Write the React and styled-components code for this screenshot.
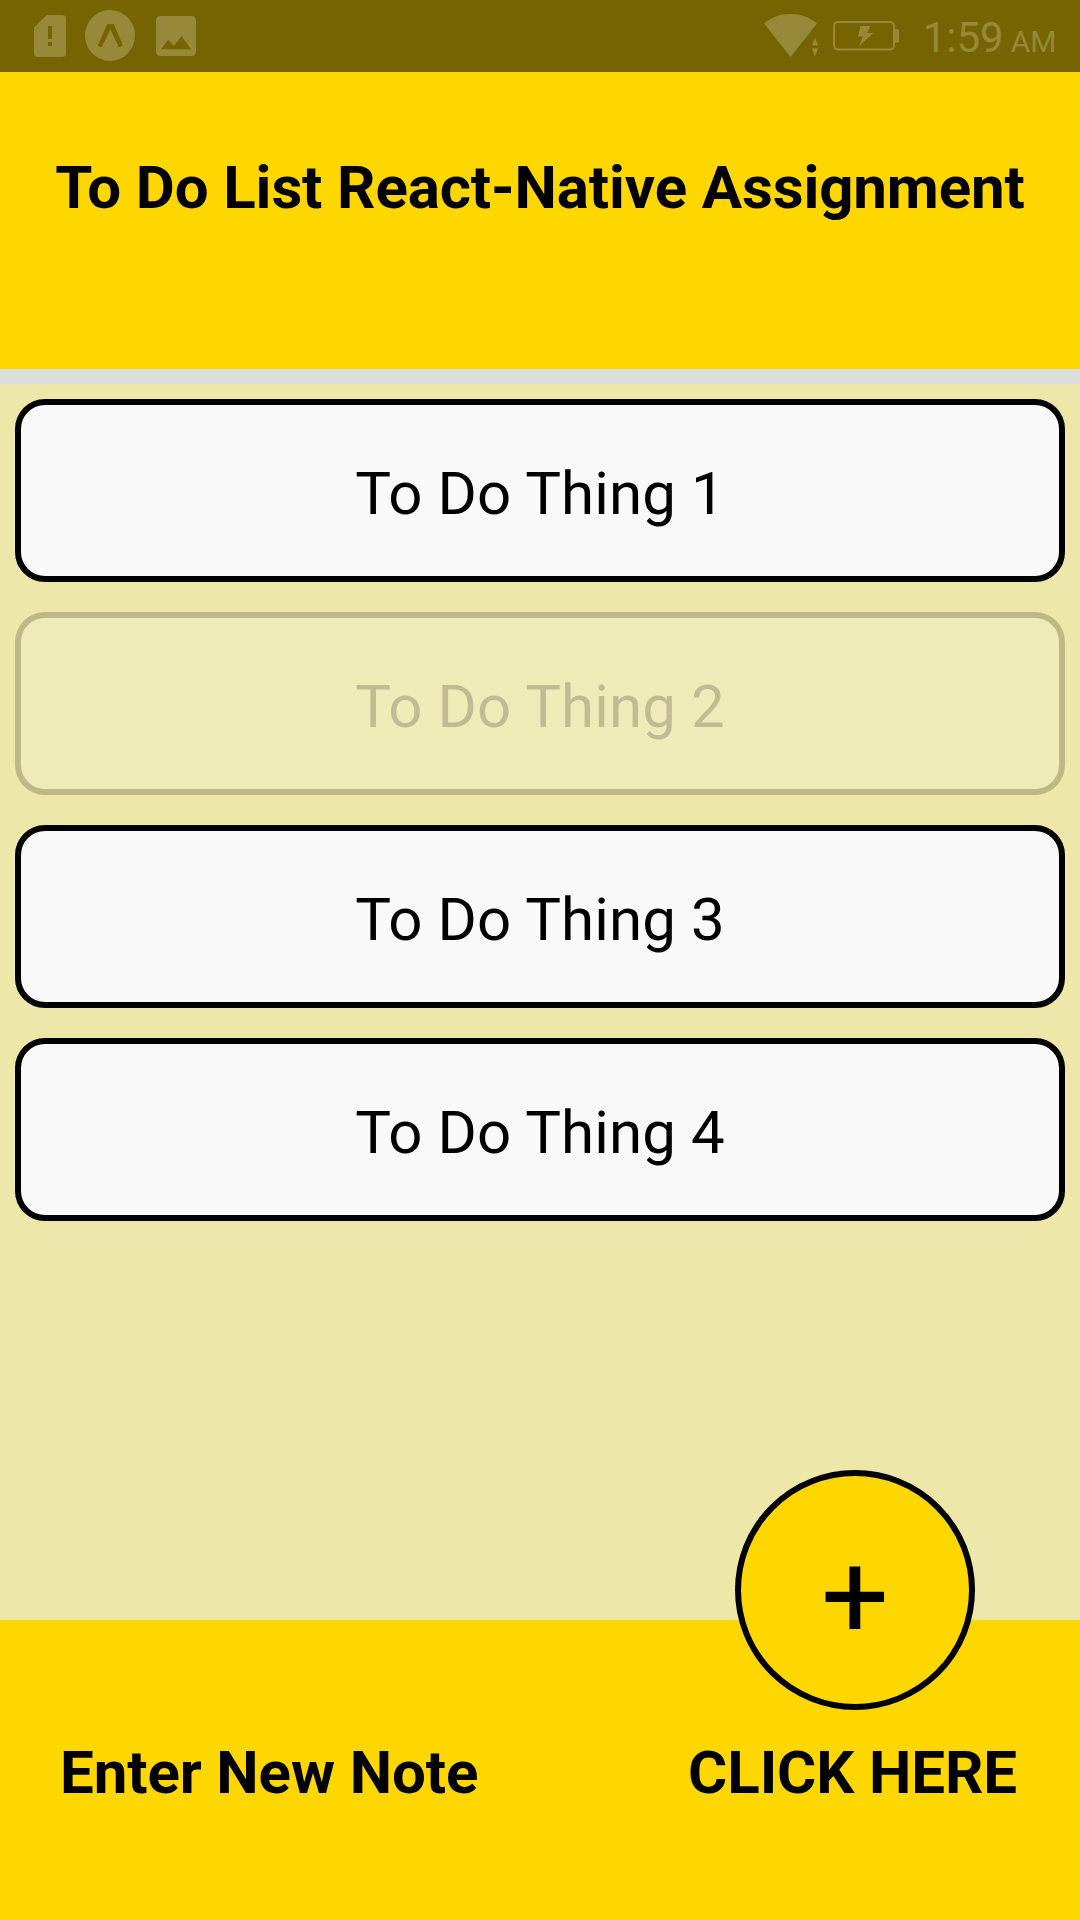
import React from 'react';
import styled, { createGlobalStyle } from 'styled-components';

const GlobalStyle = createGlobalStyle`
  * { box-sizing: border-box; }
  body { margin: 0; font-family: Roboto, sans-serif; color: #000; }
`;

const Screen = styled.div`
  display: flex;
  flex-direction: column;
  width: 1080px;
  height: 1920px;
  overflow: hidden;
  background: #ede8a9;
`;

const StatusBar = styled.div`
  display: flex;
  justify-content: space-between;
  flex: none;
  height: 72px;
  padding: 0 23.5px 0 34px;
  background: #766400;
  color: #978939;
`;

const StatusGroup = styled.div`
  display: flex;
  align-items: flex-start;
`;

const StatusIcon = styled.svg`
  display: block;
  flex: none;
  fill: currentColor;
  margin-top: ${({ $top }) => $top}px;
  margin-right: ${({ $after = 0 }) => $after}px;
`;

const Clock = styled.div`
  padding-top: 13px;
  font-size: 42px;
  line-height: 50px;
  white-space: pre;
`;

const Meridiem = styled.span`
  font-size: 30px;
  margin-left: 7px;
`;

const Header = styled.header`
  flex: none;
  height: 312px;
  padding-top: 81px;
  background: #ffd700;
  border-bottom: 15px solid #ddd;
  text-align: center;
`;

const Title = styled.h1`
  margin: 0;
  font-size: 60px;
  line-height: 70px;
  font-weight: 700;
  letter-spacing: -0.11px;
  white-space: nowrap;
`;

const List = styled.main`
  display: flex;
  flex: 1;
  flex-direction: column;
  gap: 30px;
  padding: 15px;
`;

const Card = styled.div`
  height: 183px;
  padding-top: 54px;
  background: ${({ $done }) => ($done ? 'rgba(249, 249, 249, 0.2)' : '#f9f9f9')};
  background-clip: padding-box;
  border: 6px solid ${({ $done }) => ($done ? 'rgba(0, 0, 0, 0.2)' : '#000')};
  border-radius: 30px;
  color: ${({ $done }) => ($done ? 'rgba(0, 0, 0, 0.2)' : '#000')};
  font-size: 60px;
  line-height: 70px;
  letter-spacing: 0.12px;
  text-align: center;
`;

const Footer = styled.footer`
  position: relative;
  display: flex;
  justify-content: space-between;
  flex: none;
  height: 300px;
  padding: 118px 63px 0 60px;
  background: #ffd700;
`;

const FooterLabel = styled.div`
  font-size: 60px;
  line-height: 70px;
  font-weight: 700;
  letter-spacing: -0.1px;
  white-space: nowrap;
`;

const AddButton = styled.button`
  position: absolute;
  top: -150px;
  left: 735px;
  width: 240px;
  height: 240px;
  padding: 13px 0 0;
  border: 6px solid #000;
  border-radius: 50%;
  background: #ffd700;
  color: #000;
  font-family: inherit;
  font-size: 120px;
  line-height: 140px;
`;

const notes = [
  { text: 'To Do Thing 1' },
  { text: 'To Do Thing 2', done: true },
  { text: 'To Do Thing 3' },
  { text: 'To Do Thing 4' },
];

export default function App() {
  return (
    <>
      <GlobalStyle />
      <Screen>
        <StatusBar>
          <StatusGroup>
            <StatusIcon $top={15} $after={19} width="32" height="42" viewBox="0 0 32 42">
              <path
                fillRule="evenodd"
                d="M12.5 0H28a4 4 0 0 1 4 4v34a4 4 0 0 1-4 4H4a4 4 0 0 1-4-4V12.5ZM14 11v13h4V11ZM14 27v4h4v-4Z"
              />
            </StatusIcon>
            <StatusIcon $top={10} $after={21} width="50" height="51" viewBox="0 0 50 51">
              <path
                fillRule="evenodd"
                d="M25 0a25 25.5 0 1 1 0 51a25 25.5 0 1 1 0-51ZM22.3 14L12.7 35.5L16.6 37.3L25.3 19.5L34 37.3L38 35.5L28.7 14Z"
              />
            </StatusIcon>
            <StatusIcon $top={16} width="40" height="40" viewBox="0 0 40 40">
              <path
                fillRule="evenodd"
                d="M4.5 0h31A4.5 4.5 0 0 1 40 4.5v31a4.5 4.5 0 0 1-4.5 4.5h-31A4.5 4.5 0 0 1 0 35.500v-31A4.500 4.500 0 0 1 4.500 0ZM12.300 23.500L5 33.300h30.300L25.500 20.300L17.700 30Z"
              />
            </StatusIcon>
          </StatusGroup>
          <StatusGroup>
            <StatusIcon $top={14} $after={14} width="55" height="43" viewBox="0 0 55 43">
              <path d="M0 9.500C7 3.300 16 0 26.500 0S46 3.300 53 9.500L26.500 43Z" />
              <path
                d="M51 22L55 32V34L51 43L47 34V32Z"
                fill="#766400"
                stroke="#766400"
                strokeWidth="2"
              />
              <path d="M51 23.500L54 31.500H48ZM48 34.500H54L51 42.500Z" />
            </StatusIcon>
            <StatusIcon $top={21} $after={23} width="67" height="30" viewBox="0 0 67 30">
              <rect x="1" y="1" width="60" height="27.500" rx="4" fill="none" stroke="currentColor" strokeWidth="2" />
              <path d="M61 8h3.500q1.500 0 1.500 1.500v10.500q0 1.500-1.500 1.500H61Z" />
              <path d="M27.500 5H37.500L34 12H40.500L26 25L30 15.500H25Z" />
            </StatusIcon>
            <Clock>1:59<Meridiem>AM</Meridiem></Clock>
          </StatusGroup>
        </StatusBar>
        <Header>
          <Title>To Do List React-Native Assignment</Title>
        </Header>
        <List>
          {notes.map((note) => (
            <Card key={note.text} $done={note.done}>{note.text}</Card>
          ))}
        </List>
        <Footer>
          <FooterLabel>Enter New Note</FooterLabel>
          <FooterLabel>CLICK HERE</FooterLabel>
          <AddButton>+</AddButton>
        </Footer>
      </Screen>
    </>
  );
}
